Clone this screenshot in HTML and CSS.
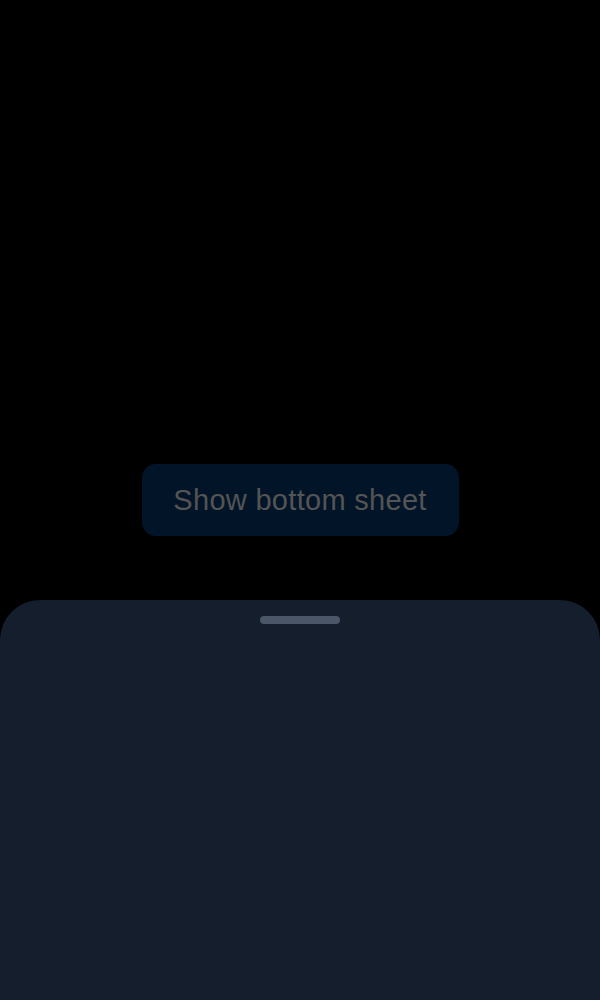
FILE: index.html
```html
<!DOCTYPE html>
<html>
<head>
<meta charset="utf-8">
<link rel="stylesheet" href="styles.css">
</head>
<body>
<main class="page">
  <button class="show-btn">Show bottom sheet</button>
</main>
<div class="sheet">
  <div class="handle"></div>
</div>
</body>
</html>
```
FILE: styles.css
```css
html, body {
  margin: 0;
  padding: 0;
  background: #000000;
  height: 1000px;
  overflow: hidden;
}
.page {
  height: 1000px;
  display: flex;
  align-items: center;
  justify-content: center;
}
.show-btn {
  width: 317px;
  height: 72px;
  border: none;
  border-radius: 14px;
  background: #021428;
  color: #545454;
  font-family: "Liberation Sans", Arial, sans-serif;
  font-size: 29px;
  letter-spacing: 0.3px;
  padding: 0;
}
.sheet {
  position: absolute;
  left: 0;
  right: 0;
  top: 600px;
  height: 400px;
  background: #151e2d;
  border-radius: 40px 40px 0 0;
  display: flex;
  justify-content: center;
}
.handle {
  margin-top: 16px;
  width: 80px;
  height: 8px;
  border-radius: 4px;
  background: #4b5669;
}
```
